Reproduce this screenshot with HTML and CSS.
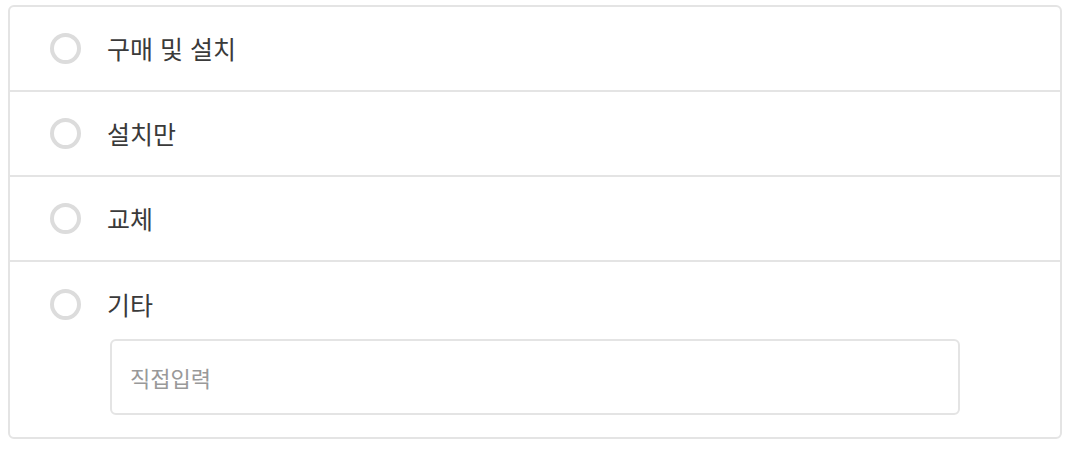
FILE: index.html
```html
<!DOCTYPE html>
<html lang="ko">
<head>
<meta charset="utf-8">
<link rel="stylesheet" href="styles.css">
</head>
<body>
<div class="card">
  <label class="row">
    <span class="radio"></span>
    <span class="label">구매 및 설치</span>
  </label>
  <label class="row">
    <span class="radio"></span>
    <span class="label">설치만</span>
  </label>
  <label class="row">
    <span class="radio"></span>
    <span class="label">교체</span>
  </label>
  <div class="row row-other">
    <label class="line">
      <span class="radio"></span>
      <span class="label">기타</span>
    </label>
    <input class="field" type="text" placeholder="직접입력">
  </div>
</div>
</body>
</html>
```

FILE: styles.css
```css
html, body {
  margin: 0;
  padding: 0;
  background: #ffffff;
}

body {
  font-family: "Noto Sans CJK KR", "Noto Sans", sans-serif;
  color: #3a3a3a;
}

.card {
  margin: 5px 12px 0 8px;
  border: 2px solid #e4e4e4;
  border-radius: 6px;
  background: #fff;
}

.row {
  display: flex;
  align-items: center;
  height: 83px;
  box-sizing: content-box;
  padding-left: 40px;
  border-bottom: 2px solid #e4e4e4;
}

.row-other {
  display: flex;
  flex-direction: column;
  align-items: flex-start;
  height: auto;
  padding-top: 27px;
  padding-bottom: 22px;
  border-bottom: none;
}

.line {
  display: flex;
  align-items: center;
  height: 31px;
}

.radio {
  width: 31px;
  height: 31px;
  box-sizing: border-box;
  border: 4px solid #dcdcdc;
  border-radius: 50%;
  flex-shrink: 0;
}

.label {
  margin-left: 26px;
  font-size: 25px;
  line-height: 31px;
  color: #3a3a3a;
}

.field {
  margin: 19px 0 0 60px;
  width: 850px;
  height: 76px;
  box-sizing: border-box;
  border: 2px solid #e4e4e4;
  border-radius: 6px;
  padding: 0 18px;
  font-family: "Noto Sans CJK KR", "Noto Sans", sans-serif;
  font-size: 22px;
  color: #333;
  outline: none;
  background: #fff;
}

.field::placeholder {
  color: #999999;
}
```
